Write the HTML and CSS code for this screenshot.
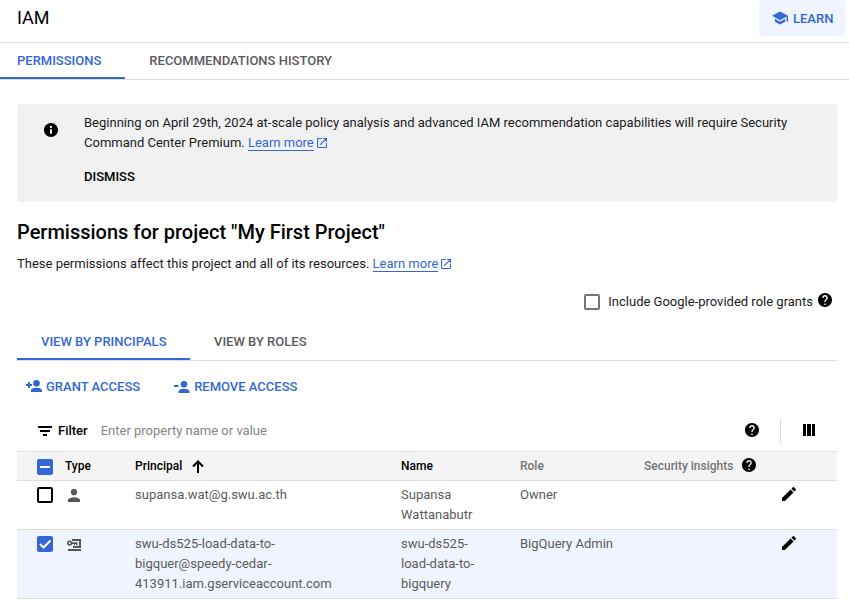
FILE: index.html
```html
<!DOCTYPE html>
<html lang="en">
<head>
<meta charset="utf-8">
<title>IAM</title>
<link rel="stylesheet" href="styles.css">
</head>
<body>
<svg width="0" height="0" class="sprite" aria-hidden="true">
  <symbol id="help" viewBox="2 2 20 20"><path d="M12 2C6.48 2 2 6.48 2 12s4.480 10 10 10 10-4.480 10-10S17.520 2 12 2zm1 17h-2v-2h2v2zm2.070-7.750l-.9.920C13.450 12.900 13 13.500 13 15h-2v-.5c0-1.100.45-2.100 1.170-2.830l1.240-1.260c.37-.36.59-.86.59-1.410 0-1.100-.9-2-2-2s-2 .9-2 2H8c0-2.210 1.790-4 4-4s4 1.790 4 4c0 .88-.36 1.680-.93 2.250z"/></symbol>
  <symbol id="info" viewBox="2 2 20 20"><path d="M12 2C6.480 2 2 6.480 2 12s4.480 10 10 10 10-4.480 10-10S17.520 2 12 2zm1.400 15.500h-2.800v-6.500h2.800v6.500zm0-8.500h-2.800V6.300h2.800V9z"/></symbol>
  <symbol id="open" viewBox="3 3 18 18"><path d="M19 19H5V5h7V3H5a2 2 0 0 0-2 2v14a2 2 0 0 0 2 2h14a2 2 0 0 0 2-2v-7h-2v7zM14 3v2h3.590l-9.830 9.830 1.410 1.410L19 6.410V10h2V3h-7z"/></symbol>
  <symbol id="edit" viewBox="3 3 18 18"><path d="M3 17.250V21h3.750L17.810 9.940l-3.750-3.750L3 17.250zM20.710 7.040a1 1 0 0 0 0-1.410l-2.340-2.340a1 1 0 0 0-1.410 0l-1.830 1.830 3.750 3.750 1.830-1.830z"/></symbol>
</svg>
<header class="header">
  <h1 class="title">IAM</h1>
  <button class="learn">
    <svg width="16" height="14" viewBox="1 3 22 18"><path d="M5 13.180v4L12 21l7-3.820v-4L12 17l-7-3.820zM12 3L1 9l11 6 9-4.910V17h2V9L12 3z"/></svg>
    <span>LEARN</span>
  </button>
</header>
<nav class="tabs">
  <a class="tab tab-first active">PERMISSIONS</a>
  <a class="tab">RECOMMENDATIONS HISTORY</a>
</nav>
<main class="content">
  <section class="notice">
    <svg class="notice-icon" width="14" height="14"><use href="#info"/></svg>
    <div>
      <p>Beginning on April 29th, 2024 at-scale policy analysis and advanced IAM recommendation capabilities will require Security<br>Command Center Premium. <a class="link">Learn more</a><svg class="open" width="10" height="10"><use href="#open"/></svg></p>
      <button class="dismiss">DISMISS</button>
    </div>
  </section>
  <h2 class="heading">Permissions for project "My First Project"</h2>
  <p class="description">These permissions affect this project and all of its resources. <a class="link">Learn more</a><svg class="open" width="10" height="10"><use href="#open"/></svg></p>
  <label class="include">
    <span class="box box-gray"></span>
    <span class="include-text">Include Google-provided role grants</span>
    <svg class="include-help" width="14" height="14"><use href="#help"/></svg>
  </label>
  <nav class="tabs view-tabs">
    <a class="tab active">VIEW BY PRINCIPALS</a>
    <a class="tab">VIEW BY ROLES</a>
  </nav>
  <div class="actions">
    <button class="action">
      <svg width="16" height="12" viewBox="0 0 16 12"><circle cx="10.500" cy="3.300" r="3.300"/><path d="M5 12v-1.800c0-1.700 3.600-2.500 5.500-2.500s5.500.8 5.500 2.500V12zM2 2h2v2h2v2H4v2H2V6H0V4h2z"/></svg>
      <span>GRANT ACCESS</span>
    </button>
    <button class="action remove">
      <svg width="16" height="12" viewBox="0 0 16 12"><circle cx="10" cy="3.300" r="3.300"/><path d="M4.500 12v-1.800c0-1.700 3.600-2.500 5.500-2.500s5.500.8 5.500 2.500V12zM0 4h4.500v2H0z"/></svg>
      <span>REMOVE ACCESS</span>
    </button>
  </div>
  <div class="filter">
    <svg width="14" height="10" viewBox="0 0 14 10"><path d="M0 0h14v2H0zM2 4h10v2H2zM5 8h4v2H5z"/></svg>
    <span class="filter-label">Filter</span>
    <span class="placeholder">Enter property name or value</span>
    <svg class="filter-help" width="14" height="14"><use href="#help"/></svg>
    <span class="divider"></span>
    <svg class="columns" width="12" height="12" viewBox="0 0 12 12"><path d="M0 0h3v12H0zM4 0h4v12H4zM9 0h3v12H9z"/></svg>
  </div>
  <div class="table">
    <div class="row head">
      <span class="box box-blue"><svg width="16" height="16" viewBox="0 0 16 16"><path d="M3 8h10" stroke="#fff" stroke-width="2"/></svg></span>
      <span class="dark">Type</span>
      <span class="dark sorted">Principal<svg width="12" height="13" viewBox="0 0 12 13"><path d="M6 13V1.500M1 6.500l5-5 5 5" fill="none" stroke="#000" stroke-width="2"/></svg></span>
      <span class="dark">Name</span>
      <span>Role</span>
      <span class="insights">Security insights<svg width="14" height="14"><use href="#help"/></svg></span>
      <span></span>
    </div>
    <div class="row">
      <span class="box"></span>
      <svg class="type person" width="12" height="13" viewBox="0 0 12 13"><circle cx="6" cy="3.200" r="3.100"/><path d="M0 13v-1.800C0 9.200 4 8.200 6 8.200s6 1 6 3V13z"/></svg>
      <span>supansa.wat@g.swu.ac.th</span>
      <span>Supansa<br>Wattanabutr</span>
      <span>Owner</span>
      <span></span>
      <svg class="edit" width="14" height="14"><use href="#edit"/></svg>
    </div>
    <div class="row selected">
      <span class="box box-blue"><svg width="16" height="16" viewBox="0 0 16 16"><path d="M3 8l3.500 3.500L13.500 4.500" fill="none" stroke="#fff" stroke-width="2"/></svg></span>
      <svg class="type" width="14" height="12" viewBox="0 0 14 12"><path d="M5 1h8v7H6M1 11h13" fill="none" stroke="#545557" stroke-width="2"/><circle cx="2.600" cy="4" r="1.800" fill="none" stroke="#545557" stroke-width="1.600"/><path d="M4.500 3.200H10.500v3H9V5H8v1.200H6.800V5H4.500z"/></svg>
      <span>swu-ds525-load-data-to-<br>bigquer@speedy-cedar-<br>413911.iam.gserviceaccount.com</span>
      <span>swu-ds525-<br>load-data-to-<br>bigquery</span>
      <span>BigQuery Admin</span>
      <span></span>
      <svg class="edit" width="14" height="14"><use href="#edit"/></svg>
    </div>
  </div>
</main>
</body>
</html>
```
FILE: styles.css
```css
* { box-sizing: border-box; }
body {
  margin: 0;
  background: #fff;
  color: #1b1b1c;
  font: 13px/20px Roboto, sans-serif;
  white-space: nowrap;
}
h1, h2, p { margin: 0; }
svg { display: block; flex: none; }
button {
  border: 0;
  padding: 0;
  background: none;
  font: 500 13px/20px Roboto, sans-serif;
}
.sprite { position: absolute; }
.header {
  display: flex;
  justify-content: space-between;
  height: 43px;
  padding: 0 4px 0 17px;
  border-bottom: 1px solid #dedede;
}
.title { font-size: 18px; font-weight: 400; line-height: 36px; color: #000; }
.learn {
  display: flex;
  align-items: center;
  gap: 5px;
  width: 86px;
  height: 36px;
  padding: 1px 0 0 13px;
  border-radius: 4px;
  background: #f0f4fe;
  color: #3367d6;
}
.learn svg { margin-top: -1px; }
.learn svg, .action svg { fill: #3367d6; }
.tabs {
  display: flex;
  height: 37px;
  border-bottom: 1px solid #dedede;
  font-weight: 500;
  line-height: 36px;
  color: #5a5b5d;
}
.tab { height: 36px; padding: 0 24px; }
.tab-first { padding-left: 17px; }
.tab.active { color: #3367d6; box-shadow: inset 0 -2px #3367d6; }
.content { padding: 24px 12px 0 17px; }
.notice {
  display: flex;
  height: 98px;
  padding: 9px 0 0 27px;
  border-radius: 4px;
  background: #f1f1f1;
}
.notice-icon { margin: 10px 26px 0 0; }
.link { color: #3367d6; border-bottom: 1px solid #3367d6; }
.open { display: inline-block; margin-left: 3px; vertical-align: -1px; fill: #3367d6; }
.dismiss { margin-top: 14px; color: #000; }
.heading { margin-top: 18px; font-size: 20px; font-weight: 500; line-height: 24px; color: #000; }
.description { margin-top: 10px; }
.include { display: flex; justify-content: flex-end; margin-top: 18px; padding-right: 5px; }
.box { flex: none; width: 16px; height: 16px; margin-top: 2px; border: 2px solid #000; border-radius: 2px; background: #fff; }
.box-gray { border-color: #757575; }
.box-blue { border: 0; background: #3367d6; }
.include-text { margin: 0 5px 0 8px; }
.include-help { margin-top: 1px; }
.view-tabs { margin-top: 12px; }
.view-tabs .active { width: 173px; }
.actions { display: flex; align-items: center; gap: 34px; height: 52px; padding: 0 0 1px 9px; }
.action { display: flex; align-items: center; gap: 4px; color: #3367d6; }
.action svg { margin-bottom: 1px; }
.remove svg { margin: 1px 0 0; }
.filter { display: flex; align-items: center; height: 38px; padding: 0 22px 2px 21px; }
.filter-label { margin: 0 13px 0 6px; font-weight: 500; color: #000; }
.placeholder { color: #858585; }
.filter-help { margin: 0 0 2px auto; }
.columns { margin-bottom: 2px; }
.divider { width: 1px; height: 24px; margin: 0 22px 0 21px; background: #dadada; }
.table { border-top: 1px solid #dedede; color: #5a5b5d; }
.row {
  display: grid;
  grid-template-columns: 28px 70px 266px 119px 124px 138px 1fr;
  align-items: start;
  padding: 4px 0 4px 20px;
  border-bottom: 1px solid #dedede;
}
.head { height: 29px; padding-top: 5px; font-weight: 500; font-size: 12px; line-height: 18px; color: #757575; background: #f4f4f4; }
.dark { color: #000; }
.sorted, .insights { display: flex; align-items: center; }
.sorted svg { margin-left: 10px; }
.insights svg { margin: -2px 0 0 9px; fill: #000; }
.type { margin: 5px 0 0 2px; fill: #545557; }
.person { margin: 4px 0 0 3px; }
.edit { margin-top: 2px; fill: #000; }
.selected { background: #f0f4fe; }
```
